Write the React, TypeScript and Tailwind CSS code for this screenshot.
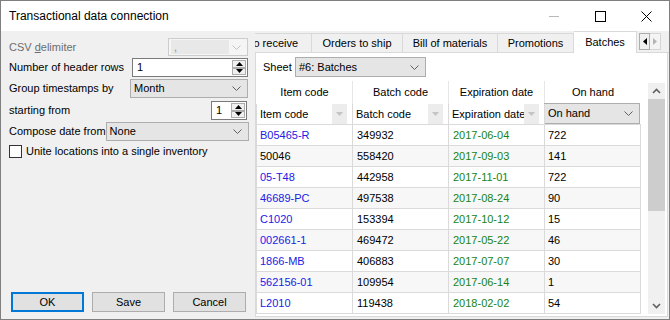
import React from "react";

const rows = [
  { item: "B05465-R", batch: "349932", date: "2017-06-04", qty: "722", link: true },
  { item: "50046", batch: "558420", date: "2017-09-03", qty: "141", link: false },
  { item: "05-T48", batch: "442958", date: "2017-11-01", qty: "722", link: true },
  { item: "46689-PC", batch: "497538", date: "2017-08-24", qty: "90", link: true },
  { item: "C1020", batch: "153394", date: "2017-10-12", qty: "15", link: true },
  { item: "002661-1", batch: "469472", date: "2017-05-22", qty: "46", link: true },
  { item: "1866-MB", batch: "406883", date: "2017-07-07", qty: "30", link: true },
  { item: "562156-01", batch: "109954", date: "2017-06-14", qty: "1", link: true },
  { item: "L2010", batch: "119438", date: "2018-02-02", qty: "54", link: true },
];

function Chevron({ className = "" }: { className?: string }) {
  return (
    <svg width="9" height="5" viewBox="0 0 9 5" className={className}>
      <path d="M0.5 0.5L4.5 4.5L8.5 0.5" fill="none" stroke="currentColor" strokeWidth="1" />
    </svg>
  );
}

function Combo({ text, className }: { text: string; className: string }) {
  return (
    <div className={`flex shrink-0 items-center border border-[#adadad] bg-[#e5e5e5] ${className}`}>
      <span className="flex-1 pl-[3px] whitespace-nowrap overflow-hidden">{text}</span>
      <Chevron className="mr-[6px] text-[#606060] shrink-0" />
    </div>
  );
}

function SpinBtn({ up }: { up?: boolean }) {
  return (
    <div className="flex-1 flex items-center justify-center border border-[#acacac] bg-[#f0f0f0]">
      <svg width="7" height="4" viewBox="0 0 7 4">
        <path d={up ? "M0 4L3.5 0L7 4Z" : "M0 0L3.5 4L7 0Z"} fill="#000" />
      </svg>
    </div>
  );
}

function Spin({ value, className }: { value: string; className: string }) {
  return (
    <div className={`flex shrink-0 border border-[#7a7a7a] bg-white ${className}`}>
      <span className="flex-1 pl-[4px] flex items-center">{value}</span>
      <div className="flex flex-col w-[15px] py-[1px] pr-[1px]">
        <SpinBtn up />
        <SpinBtn />
      </div>
    </div>
  );
}

function FilterCell({ label }: { label: string }) {
  return (
    <div className="w-[96px] border-r border-[#dadada] flex items-center pl-[3px] relative">
      <span className="whitespace-nowrap">{label}</span>
      <div className="absolute right-[5px] top-0 bottom-0 w-[15px] bg-[#ececec] flex items-center justify-center">
        <svg width="7" height="4" viewBox="0 0 7 4">
          <path d="M0 0L3.5 4L7 0Z" fill="#c4c4c4" />
        </svg>
      </div>
    </div>
  );
}

function Tab({ label, className }: { label: string; className: string }) {
  return (
    <div
      className={`h-[20px] shrink-0 flex items-center justify-center border-t border-r border-b border-[#d9d9d9] bg-[#f0f0f0] whitespace-nowrap ${className}`}
    >
      {label}
    </div>
  );
}

export default function App() {
  return (
    <div className="w-[670px] h-[320px] border border-[#7f7f7f] bg-[#f0f0f0] flex flex-col overflow-hidden font-['Liberation_Sans',Arial,sans-serif] text-[11px] text-black">
      {/* Title bar */}
      <div className="h-[30px] shrink-0 bg-white flex items-center">
        <span className="pl-[8px] text-[12px]">Transactional data connection</span>
        <div className="ml-auto flex h-full">
          <div className="w-[46px] flex items-center justify-center">
            <div className="w-[10px] h-[1px] bg-[#b9b9b9]" />
          </div>
          <div className="w-[46px] flex items-center justify-center">
            <div className="w-[11px] h-[11px] border border-black" />
          </div>
          <div className="w-[46px] flex items-center justify-center">
            <svg width="11" height="11" viewBox="0 0 11 11">
              <path d="M0.5 0.5L10.5 10.5M10.5 0.5L0.5 10.5" stroke="#000" strokeWidth="1" />
            </svg>
          </div>
        </div>
      </div>

      <div className="flex flex-1 min-h-0">
        {/* Left settings panel */}
        <div className="w-[254px] shrink-0 flex flex-col pl-[8px] pr-[7px] pt-[7px] pb-[7px] whitespace-nowrap">
          <div className="h-[18px] flex items-center">
            <span className="flex-1 text-[#6d6d6d]">
              CSV <span className="underline">d</span>elimiter
            </span>
            <div className="w-[80px] shrink-0 h-full border border-[#cccccc] bg-[#f5f5f5] flex items-center">
              <div className="ml-[2px] w-[58px] h-[14px] bg-[#e8e8e8] text-[#8a8a8a] pl-[3px] leading-[14px]">,</div>
              <Chevron className="ml-auto mr-[6px] text-[#c2c2c2]" />
            </div>
          </div>
          <div className="mt-[2px] h-[19px] flex items-center">
            <span className="flex-1">Number of header rows</span>
            <Spin value="1" className="w-[116px] h-full" />
          </div>
          <div className="mt-[2px] h-[19px] flex items-center">
            <span className="flex-1">Group timestamps by</span>
            <Combo text="Month" className="w-[118px] h-full" />
          </div>
          <div className="mt-[3px] h-[19px] flex items-center">
            <span className="flex-1">starting from</span>
            <Spin value="1" className="w-[36px] h-full mr-[1px]" />
          </div>
          <div className="mt-[2px] h-[19px] flex items-center">
            <span className="flex-1">Compose date from</span>
            <Combo text="None" className="w-[143px] h-full" />
          </div>
          <div className="mt-[3px] h-[15px] flex items-center">
            <div className="w-[13px] h-[13px] border border-[#333333] bg-white" />
            <span className="ml-[4px]">Unite locations into a single inventory</span>
          </div>

          <div className="mt-auto flex h-[20px] pl-[2px]">
            <div className="w-[73px] border-2 border-[#0078d7] bg-[#e1e1e1] flex items-center justify-center">OK</div>
            <div className="ml-[8px] w-[73px] border border-[#adadad] bg-[#e1e1e1] flex items-center justify-center">Save</div>
            <div className="ml-[8px] w-[73px] border border-[#adadad] bg-[#e1e1e1] flex items-center justify-center">Cancel</div>
          </div>
        </div>

        {/* Tab control */}
        <div className="flex-1 min-w-0 flex flex-col">
          <div className="relative h-[22px] shrink-0 overflow-hidden">
            <div className="flex items-end h-full ml-[-20px]">
              <Tab label="To receive" className="w-[77px]" />
              <Tab label="Orders to ship" className="w-[91px]" />
              <Tab label="Bill of materials" className="w-[95px]" />
              <Tab label="Promotions" className="w-[76px]" />
              <div className="w-[63px] h-[22px] shrink-0 bg-white border-t border-r border-[#d9d9d9] flex items-center justify-center">
                Batches
              </div>
              <div className="flex-1 h-[1px] bg-[#d9d9d9]" />
            </div>
            <div className="absolute right-[8px] top-[2px] h-[17px] flex">
              <div className="w-[11px] border border-[#adadad] bg-[#f0f0f0] flex items-center justify-center">
                <svg width="4" height="7" viewBox="0 0 4 7">
                  <path d="M4 0L0 3.5L4 7Z" fill="#000" />
                </svg>
              </div>
              <div className="w-[11px] border border-l-0 border-[#d5d5d5] bg-[#f4f4f4] flex items-center justify-center">
                <svg width="4" height="7" viewBox="0 0 4 7">
                  <path d="M0 0L4 3.5L0 7Z" fill="#b5b5b5" />
                </svg>
              </div>
            </div>
          </div>

          <div className="flex-1 min-h-0 border-x border-b border-[#d9d9d9] bg-white mr-[1px] mb-[2px] flex flex-col">
            <div className="mt-[4px] h-[20px] flex items-center pl-[7px]">
              <span className="w-[32px]">Sheet</span>
              <Combo text="#6: Batches" className="w-[131px] h-full" />
            </div>

            <div className="mt-[4px] flex">
              <div className="w-[385px] shrink-0 flex flex-col">
                <div className="h-[23px] flex pl-[1px]">
                  <div className="w-[96px] border-r border-[#e6e6e6] flex items-center justify-center">Item code</div>
                  <div className="w-[96px] border-r border-[#e6e6e6] flex items-center justify-center">Batch code</div>
                  <div className="w-[96px] border-r border-[#e6e6e6] flex items-center justify-center">Expiration date</div>
                  <div className="w-[96px] flex items-center justify-center">On hand</div>
                </div>
                <div className="h-[21px] flex border-l border-b border-[#dadada]">
                  <FilterCell label="Item code" />
                  <FilterCell label="Batch code" />
                  <FilterCell label="Expiration date" />
                  <div className="w-[96px] border border-[#adadad] bg-[#e5e5e5] flex items-center ml-[-1px] mt-[-1px]">
                    <span className="flex-1 pl-[3px]">On hand</span>
                    <Chevron className="mr-[6px] text-[#606060]" />
                  </div>
                </div>
                {rows.map((r, i) => (
                  <div
                    key={r.batch}
                    className={`h-[21px] flex border-l border-b border-[#dadada] ${i % 2 === 1 ? "bg-[#f7f7f7]" : "bg-white"}`}
                  >
                    <div className={`w-[96px] border-r border-[#dadada] flex items-center pl-[3px] ${r.link ? "text-[#2020e6]" : "text-black"}`}>
                      {r.item}
                    </div>
                    <div className="w-[96px] border-r border-[#dadada] flex items-center pl-[4px]">{r.batch}</div>
                    <div className="w-[96px] border-r border-[#dadada] flex items-center pl-[4px] text-[#168416]">{r.date}</div>
                    <div className="w-[96px] border-r border-[#dadada] flex items-center pl-[3px]">{r.qty}</div>
                  </div>
                ))}
              </div>

              {/* Vertical scrollbar */}
              <div className="ml-[7px] mt-[2px] w-[17px] h-[231px] bg-[#f0f0f0] flex flex-col">
                <div className="h-[16px] flex items-center justify-center">
                  <svg width="9" height="6" viewBox="0 0 9 6">
                    <path d="M1 5L4.5 1.5L8 5" fill="none" stroke="#606060" strokeWidth="1.6" />
                  </svg>
                </div>
                <div className="h-[112px] bg-[#cdcdcd]" />
                <div className="mt-auto h-[16px] flex items-center justify-center">
                  <svg width="9" height="6" viewBox="0 0 9 6">
                    <path d="M1 1L4.5 4.5L8 1" fill="none" stroke="#606060" strokeWidth="1.6" />
                  </svg>
                </div>
              </div>
            </div>
          </div>
        </div>
      </div>
    </div>
  );
}
